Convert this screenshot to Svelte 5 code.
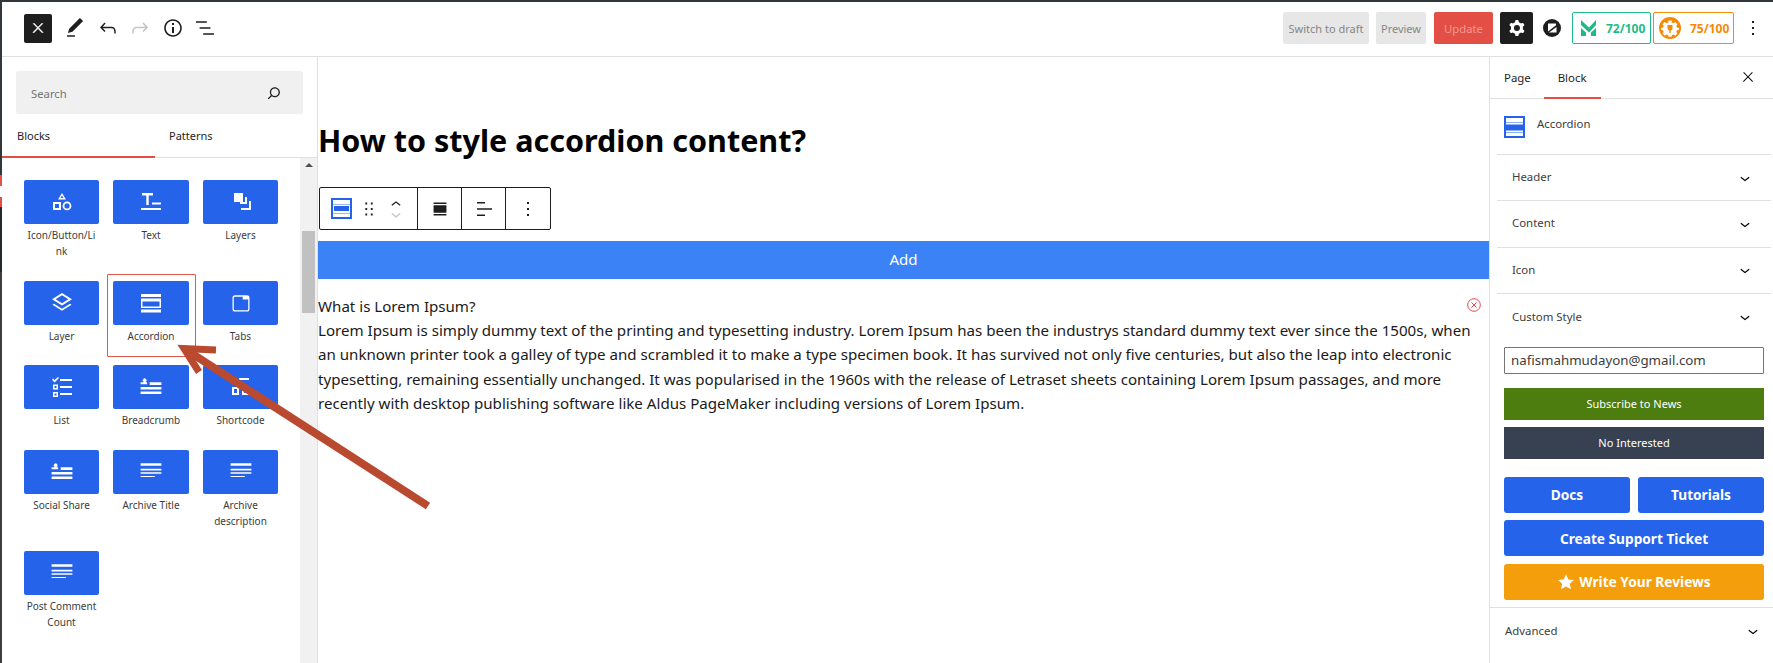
<script>
  const lines = 'M4 4h16v2H4zM4 8.5h16v1.5H4zM4 11.5h16v1.2H4zM4 14.5h11v1H4z';
  const byline = 'M4 7.5h2l.6-.2a1.4 1.4 0 1 1 1 0l.6.2h.8V9H4zM11 7.5h9V9.5h-9zM4 11h16v2H4zM4 14.5h16v2H4z';
  const blocks = [
    { label: 'Icon/Button/Link', kind: 'shapes' },
    { label: 'Text', kind: 'text' },
    { label: 'Layers', kind: 'layers' },
    { label: 'Layer', kind: 'layer' },
    { label: 'Accordion', kind: 'accordion', marked: true },
    { label: 'Tabs', kind: 'tabs' },
    { label: 'List', kind: 'list' },
    { label: 'Breadcrumb', kind: 'byline' },
    { label: 'Shortcode', kind: 'shortcode' },
    { label: 'Social Share', kind: 'byline' },
    { label: 'Archive Title', kind: 'lines' },
    { label: 'Archive description', kind: 'lines' },
    { label: 'Post Comment Count', kind: 'lines' }
  ];
  const panels = ['Header', 'Content', 'Icon', 'Custom Style'];
  const chevron = 'M17.5 11.6L12 16l-5.5-4.4.9-1.2L12 14l4.5-3.6 1 1.2z';
  const kebab = 'M13 19h-2v-2h2v2zm0-6h-2v-2h2v2zm0-6h-2V5h2v2z';
  const cross = 'M13 11.8l6.1-6.3-1-1-6.1 6.2-6.1-6.2-1 1 6.1 6.3-6.5 6.7 1 1 6.5-6.6 6.5 6.6 1-1z';
</script>

<div class="app">
  <header class="topbar">
    <div class="tools">
      <button class="close" aria-label="Close">
        <svg viewBox="0 0 24 24" width="16" height="16"><path fill="#fff" stroke="#fff" stroke-width=".8" d={cross}/></svg>
      </button>
      <svg class="tool" viewBox="0 0 24 24"><path d="M20.1 5.1L16.9 2 6.2 12.7l-1.3 4.4 4.5-1.3L20.1 5.1zM4 20.8h8v-1.5H4v1.5z"/></svg>
      <svg class="tool" viewBox="0 0 24 24"><path d="M18.3 11.7c-.6-.6-1.4-.9-2.3-.9H6.7l2.9-3.3-1.1-1-4.5 5L8.5 16l1-1-2.7-2.7H16c.5 0 .9.2 1.3.5 1 1 1 3.4 1 4.5v.3h1.5v-.2c0-1.5 0-4.3-1.5-5.7z"/></svg>
      <svg class="tool off" viewBox="0 0 24 24"><path d="M15.6 6.5l-1.1 1 2.9 3.3H8c-.9 0-1.7.3-2.3.9-1.4 1.5-1.4 4.2-1.4 5.6v.2h1.5v-.3c0-1.1 0-3.5 1-4.5.3-.3.7-.5 1.3-.5h9.2L14.5 15l1.1 1.1 4.6-4.6-4.6-5z"/></svg>
      <svg class="tool" viewBox="0 0 24 24"><path d="M12 3.2c-4.8 0-8.8 3.9-8.8 8.8 0 4.8 3.9 8.8 8.8 8.8 4.8 0 8.8-3.9 8.8-8.8 0-4.8-4-8.8-8.8-8.8zm0 16c-4 0-7.2-3.3-7.2-7.2C4.8 8 8 4.8 12 4.8s7.2 3.3 7.2 7.2c0 4-3.2 7.2-7.2 7.2zM11 17h2v-6h-2v6zm0-8h2V7h-2v2z"/></svg>
      <svg class="tool" viewBox="0 0 24 24"><path d="M13.8 5.2H3v1.5h10.8V5.2zm-3.6 12v1.5H21v-1.5H10.2zm7.2-6H6.6v1.5h10.8v-1.5z"/></svg>
    </div>
    <div class="actions">
      <span class="btn draft">Switch to draft</span>
      <span class="btn preview">Preview</span>
      <span class="btn update">Update</span>
      <span class="gear">
        <svg viewBox="0 0 24 24" width="24" height="24"><path fill="#fff" fill-rule="evenodd" d="M10.289 4.836A1 1 0 0111.275 4h1.306a1 1 0 01.987.836l.244 1.466c.787.26 1.503.679 2.108 1.218l1.393-.522a1 1 0 011.216.437l.653 1.13a1 1 0 01-.23 1.273l-1.148.944a6.025 6.025 0 010 2.435l1.149.946a1 1 0 01.23 1.272l-.653 1.13a1 1 0 01-1.216.437l-1.394-.522c-.605.54-1.32.958-2.108 1.218l-.244 1.466a1 1 0 01-.987.836h-1.306a1 1 0 01-.986-.836l-.244-1.466a5.995 5.995 0 01-2.108-1.218l-1.394.522a1 1 0 01-1.217-.436l-.653-1.131a1 1 0 01.23-1.272l1.149-.946a6.026 6.026 0 010-2.435l-1.148-.944a1 1 0 01-.23-1.272l.653-1.131a1 1 0 011.217-.437l1.393.522a5.994 5.994 0 012.108-1.218l.244-1.466zM14.929 12a3 3 0 11-6 0 3 3 0 016 0z"/></svg>
      </span>
      <svg class="zlogo" viewBox="0 0 18 18" width="18" height="18">
        <circle cx="9" cy="9" r="9" fill="#1e1e1e"/>
        <path fill="#fff" d="M5 4.500h8v1.800L5 12.500zM13.500 8v5.500H6z"/>
      </svg>
      <span class="score green">
        <svg viewBox="0 0 16 16" width="16" height="16"><path fill="#1fbb85" d="M0 0L8 7.500L15 0V5L8 12.500L0 5ZM0 8L5 12.500V16H0ZM15 8V16H10V12.500Z"/></svg>
        <b>72/100</b>
      </span>
      <span class="score orange">
        <svg viewBox="0 0 22 22" width="22" height="22"><circle cx="11" cy="11" r="11" fill="#f58a07"/><path fill="#fff" fill-rule="evenodd" d="M9.500 3.500h3l.4 2 1.700.7 1.700-1.100 2.100 2.100-1.100 1.700.7 1.700 2 .4v1.800l-2 .4-.7 1.700 1.100 1.700-2.100 2.100-1.700-1.100-1.700.7-.4 1.500h-3l-.4-1.500-1.700-.7-1.700 1.100-2.100-2.100 1.100-1.700-.7-1.700-2-.4V11l2-.4.7-1.700-1.100-1.700 2.100-2.100 1.700 1.100 1.700-.7zM8.500 8v3.200c0 1.200 1 2.200 1.800 2.300V16h1.400v-2.500c.8-.1 1.800-1.100 1.800-2.300V8z"/></svg>
        <b>75/100</b>
      </span>
      <svg class="more" viewBox="0 0 24 24" width="24" height="24"><path d={kebab}/></svg>
    </div>
  </header>

  <div class="body">
    <aside class="inserter">
      <div class="search">
        <span>Search</span>
        <svg viewBox="0 0 24 24" width="20" height="20"><path d="M13 5c-3.300 0-6 2.700-6 6 0 1.400.5 2.700 1.300 3.700l-3.800 3.800 1.100 1.100 3.800-3.800c1 .8 2.300 1.300 3.700 1.300 3.300 0 6-2.700 6-6S16.300 5 13 5zm0 10.500c-2.500 0-4.500-2-4.500-4.500s2-4.500 4.500-4.500 4.500 2 4.500 4.500-2 4.500-4.500 4.500z"/></svg>
      </div>
      <div class="ins-tabs">
        <span class="ins-tab on">Blocks</span>
        <span class="ins-tab">Patterns</span>
      </div>
      <div class="ins-scroll">
        <div class="grid">
          {#each blocks as b}
            <div class="item" class:marked={b.marked}>
              <div class="tile">
                <svg viewBox="0 0 24 24" width="24" height="24" fill="#fff">
                  {#if b.kind === 'shapes'}
                    <path d="M12 3l4 6.500H8zm0 2.600L10.500 8h3z" fill-rule="evenodd"/>
                    <path d="M3 12h8v8H3zm2 2v4h4v-4z" fill-rule="evenodd"/>
                    <path d="M17 11.500a4.400 4.400 0 1 1 0 8.800 4.400 4.400 0 0 1 0-8.800zm0 1.800a2.600 2.600 0 1 0 0 5.200 2.600 2.600 0 0 0 0-5.200z" fill-rule="evenodd"/>
                  {:else if b.kind === 'text'}
                    <path d="M3 3h11v2.400h-4.300V15H7.300V5.400H3zM13 12.500h9v2h-9zM2 18h20v2H2z"/>
                  {:else if b.kind === 'layers'}
                    <path d="M5 3h9v9H5zM16 7h2v7h-7v-2h5zM20 11h2v9h-10v-2h8z"/>
                  {:else if b.kind === 'layer'}
                    <path d="M12 2l10 6.300-10 6.300L2 8.300zm0 2.300L5.600 8.300 12 12.300l6.400-4z" fill-rule="evenodd"/>
                    <path d="M4 12.800l8 5 8-5 1.500 1-9.500 6-9.500-6z"/>
                  {:else if b.kind === 'accordion'}
                    <path d="M2 3h20v3H2zM2 18.500h20v3H2z"/>
                    <path d="M2 7.500h20v9.500H2zm1.500 3v5h17v-5z" fill-rule="evenodd"/>
                  {:else if b.kind === 'tabs'}
                    <path transform="translate(1.800 1.800) scale(.85)" d="M5 3h14a3 3 0 0 1 3 3v13a3 3 0 0 1-3 3H5a3 3 0 0 1-3-3V6a3 3 0 0 1 3-3zm0 1.500A1.500 1.500 0 0 0 3.500 6v13A1.500 1.500 0 0 0 5 20.500h14a1.500 1.500 0 0 0 1.500-1.500V8H14V4.500z" fill-rule="evenodd"/>
                  {:else if b.kind === 'list'}
                    <path d="M2 4.500l1-1 1.500 1.500L8 2l1 1-4.500 4.500zM10 4h12v2H10zM10 11h12v2H10zM10 18h12v2H10z"/>
                    <path d="M3 9.500h5v5H3zm1.500 1.500v2h2v-2zM3 17h5v5H3zm1.500 1.500v2h2v-2z" fill-rule="evenodd"/>
                  {:else if b.kind === 'byline'}
                    <path d={byline} transform="translate(-3.600 -2.400) scale(1.300)"/>
                  {:else if b.kind === 'shortcode'}
                    <path d="M10 3h10v2H10zM3 3h5v5H3zM3 12h7v8H3zm2 2v4h3v-4zM13 12h7v8h-7zm2 2v4h3v-4z" fill-rule="evenodd"/>
                  {:else}
                    <path d={lines} transform="translate(-3.600 -1.500) scale(1.300 1.200)"/>
                  {/if}
                </svg>
              </div>
              <div class="label">{b.label}</div>
            </div>
          {/each}
        </div>
        <div class="scrollbar">
          <i class="up"></i>
          <i class="thumb"></i>
        </div>
      </div>
    </aside>

    <main class="canvas">
      <h1>How to style accordion content?</h1>
      <div class="toolbar">
        <div class="group first">
          <svg class="acc" viewBox="0 0 21 21" width="21" height="21">
            <rect x="1" y="1" width="19" height="19" fill="#fff" stroke="#2563eb" stroke-width="2"/>
            <path d="M2 6.500h17" stroke="#9db9f3" stroke-width="1"/>
            <rect x="3" y="8" width="15" height="5" fill="#2563eb"/>
            <path d="M2 15.500h17" stroke="#9db9f3" stroke-width="1"/>
          </svg>
          <svg class="drag" viewBox="0 0 24 24" width="22" height="22"><path d="M8 7h2V5H8v2zm0 6h2v-2H8v2zm0 6h2v-2H8v2zm6-14v2h2V5h-2zm0 8h2v-2h-2v2zm0 6h2v-2h-2v2z"/></svg>
          <div class="mover">
            <svg viewBox="0 0 24 12" width="20" height="10"><path d="M6.500 9.400L12 5l5.500 4.400-.9 1.200L12 7l-4.500 3.600-1-1.200z"/></svg>
            <svg viewBox="0 0 24 12" width="20" height="10" class="dim"><path d="M17.500 3.600L12 8 6.500 3.600l.9-1.200L12 6l4.500-3.600 1 1.200z"/></svg>
          </div>
        </div>
        <div class="group">
          <svg viewBox="0 0 24 24" width="22" height="22"><path d="M5 5h14v1.500H5zM5 8h14v8H5zM5 17.500h14V19H5z"/></svg>
        </div>
        <div class="group">
          <svg viewBox="0 0 24 24" width="24" height="24"><path d="M5 5h8v1.500H5zM5 11.250h15v1.500H5zM5 17.500h8V19H5z"/></svg>
        </div>
        <div class="group last">
          <svg viewBox="0 0 24 24" width="24" height="24"><path d={kebab}/></svg>
        </div>
      </div>
      <div class="add">Add</div>
      <div class="question">
        <span>What is Lorem Ipsum?</span>
        <svg viewBox="0 0 14 14" width="14" height="14" fill="none" stroke="#e5484d"><circle cx="7" cy="7" r="6.300"/><path d="M4.500 4.500l5 5M9.500 4.500l-5 5"/></svg>
      </div>
      <p>Lorem Ipsum is simply dummy text of the printing and typesetting industry. Lorem Ipsum has been the industrys standard dummy text ever since the 1500s, when an unknown printer took a galley of type and scrambled it to make a type specimen book. It has survived not only five centuries, but also the leap into electronic typesetting, remaining essentially unchanged. It was popularised in the 1960s with the release of Letraset sheets containing Lorem Ipsum passages, and more recently with desktop publishing software like Aldus PageMaker including versions of Lorem Ipsum.</p>
    </main>

    <aside class="settings">
      <div class="set-tabs">
        <span class="set-tab">Page</span>
        <span class="set-tab on">Block</span>
        <svg viewBox="0 0 24 24" width="16" height="16"><path d={cross}/></svg>
      </div>
      <div class="card">
        <svg viewBox="0 0 21 22" width="21" height="22">
          <rect x="1" y="1" width="19" height="20" fill="#fff" stroke="#2563eb" stroke-width="2"/>
          <path d="M2 6.500h17M2 16.500h17" stroke="#8fb0f0" stroke-width="1"/>
          <rect x="2" y="8.500" width="17" height="6" fill="#2563eb"/>
        </svg>
        <span>Accordion</span>
      </div>
      <div class="panels">
        {#each panels as p}
          <div class="panel">
            <span>{p}</span>
            <svg viewBox="0 0 24 24" width="20" height="20"><path d={chevron}/></svg>
          </div>
        {/each}
      </div>
      <div class="form">
        <input value="nafismahmudayon@gmail.com" readonly />
        <div class="cta sub">Subscribe to News</div>
        <div class="cta no">No Interested</div>
        <div class="links">
          <span class="link">Docs</span>
          <span class="link">Tutorials</span>
          <span class="link wide">Create Support Ticket</span>
          <span class="link wide review">
            <svg viewBox="0 0 24 24" width="18" height="18"><path fill="#fff" d="M12 1.500l3.200 7 7.300.8-5.400 5 1.500 7.500-6.600-3.800-6.600 3.800 1.500-7.500-5.400-5 7.300-.8z"/></svg>
            Write Your Reviews
          </span>
        </div>
      </div>
      <div class="advanced">
        <span>Advanced</span>
        <svg viewBox="0 0 24 24" width="20" height="20"><path d={chevron}/></svg>
      </div>
    </aside>
  </div>

  <div class="edge"></div>
  <svg class="arrow" viewBox="0 0 1773 663" width="1773" height="663" fill="none" stroke="#b94a30">
    <path d="M188 351L428 506" stroke-width="8"/>
    <path d="M216 350L184 348.500L199 372" stroke-width="7"/>
  </svg>
</div>

<style>
  :global(body) { margin: 0; background: #fff; }
  * { box-sizing: border-box; }
  .app {
    position: relative;
    width: 1773px;
    height: 663px;
    overflow: hidden;
    border-top: 2px solid #32373c;
    padding-left: 2px;
    background: #fff;
    font-family: "Noto Sans", "Open Sans", sans-serif;
    color: #1e1e1e;
    display: flex;
    flex-direction: column;
  }
  .topbar {
    height: 55px;
    flex: none;
    display: flex;
    align-items: center;
    justify-content: space-between;
    border-bottom: 1px solid #e0e0e0;
    padding: 0 8px 2px 22px;
  }
  .tools { display: flex; align-items: center; gap: 8.400px; }
  .close {
    width: 28px; height: 29px; padding: 0; border: 0; border-radius: 2px;
    background: #1e1e1e; display: flex; align-items: center; justify-content: center;
    margin-right: 3px;
  }
  .tool { width: 24px; height: 24px; fill: #1e1e1e; }
  .tool.off { fill: #c4c4c4; }
  .actions { display: flex; align-items: center; height: 32px; }
  .btn {
    height: 32px; display: flex; align-items: center; justify-content: center;
    border-radius: 2px; font-size: 11px; margin-right: 7px;
  }
  .draft { width: 86px; background: #e7e7e7; color: #868686; }
  .preview { width: 50px; background: #e7e7e7; color: #868686; margin-right: 8px; }
  .update { width: 59px; background: #e34f45; color: #f09a92; font-size: 11.300px; }
  .gear {
    width: 33px; height: 32px; background: #1e1e1e; border-radius: 2px;
    display: flex; align-items: center; justify-content: center; margin-right: 10px;
  }
  .zlogo { margin-right: 11px; }
  .score {
    height: 32px; border: 1px solid; border-radius: 2px; display: flex; align-items: center;
    font-size: 12px;
  }
  .score b { font-weight: 700; }
  .green { width: 79px; border-color: #1fbb85; color: #1fbb85; padding-left: 8px; gap: 9px; margin-right: 2px; }
  .orange { width: 81px; border-color: #f58a07; color: #f58a07; padding-left: 5px; gap: 9px; margin-right: 7px; }
  .more { fill: #1e1e1e; }

  .body { flex: 1; display: flex; min-height: 0; }

  .inserter {
    width: 316px; flex: none; border-right: 1px solid #e0e0e0;
    display: flex; flex-direction: column;
  }
  .search {
    margin: 14px 14px 0 14px; height: 43px; flex: none; background: #f0f0f0; border-radius: 2px;
    display: flex; align-items: center; justify-content: space-between;
    padding: 1px 19px 0 15px; font-size: 11.300px; color: #757575;
  }
  .search svg { fill: #1e1e1e; }
  .ins-tabs {
    height: 44px; flex: none; display: flex; border-bottom: 1px solid #e0e0e0;
  }
  .ins-tab {
    width: 153px; height: 44px; font-size: 11px; padding-left: 15px; line-height: 44px;
  }
  .ins-tab + .ins-tab { padding-left: 14px; }
  .ins-tab.on { box-shadow: inset 0 -2px 0 #e34f45; }
  .ins-scroll { flex: 1; display: flex; justify-content: space-between; min-height: 0; }
  .grid {
    width: 276px; margin-left: 22px; padding-top: 22px;
    display: grid; grid-template-columns: 75px 76px 75px; column-gap: 14px; row-gap: 21.700px;
    grid-auto-rows: min-content;
  }
  .item { position: relative; }
  .item.marked::after {
    content: ""; position: absolute; left: -6px; right: -7px; top: -7px; bottom: -13px;
    border: 1.500px solid #e0584e; border-radius: 1px;
  }
  .tile {
    height: 44px; background: #2563eb; border-radius: 2px;
    display: flex; align-items: center; justify-content: center;
  }
  .label {
    margin-top: 3px; padding: 0 1.500px; font-size: 10px; line-height: 16px; text-align: center; color: #3c3c3c;
    overflow-wrap: anywhere;
  }
  .scrollbar { width: 17px; background: #f1f1f1; position: relative; }
  .up {
    position: absolute; left: 5px; top: 5px; width: 0; height: 0;
    border: 4px solid transparent; border-top: 0; border-bottom: 4px solid #505050;
  }
  .thumb { position: absolute; left: 2px; right: 2px; top: 73px; height: 82px; background: #c1c1c1; }

  .canvas { flex: 1; min-width: 0; font-size: 15.120px; line-height: 24.500px; color: #1a1a1a; }
  h1 {
    margin: 58px 0 0 0; font-size: 30.500px; line-height: 50px; font-weight: 700; color: #000; height: 72px;
  }
  .toolbar {
    margin-left: 1px; width: 232px; height: 43px; border: 1px solid #1e1e1e; border-radius: 2px; display: flex; background: #fff;
  }
  .group { display: flex; align-items: center; justify-content: center; width: 44px; border-left: 1px solid #1e1e1e; fill: #1e1e1e; }
  .group.first { width: 97px; border-left: 0; justify-content: flex-start; padding-left: 11px; }
  .group.last { flex: 1; }
  .drag { margin-left: 5.700px; }
  .mover { display: flex; flex-direction: column; margin-left: 6px; }
  .mover .dim { fill: #c4c4c4; margin-top: 4px; }
  .add {
    margin-top: 11px; height: 38px; background: #3b82f6; color: #fff; text-align: center;
    line-height: 37px;
  }
  .question {
    margin-top: 15px; display: flex; align-items: center; justify-content: space-between; padding-right: 8px;
    height: 24.500px;
  }
  .question svg { margin-top: -2px; }
  p { margin: -1px 0 0; width: 1161px; }

  .settings { width: 284px; flex: none; border-left: 1px solid #e0e0e0; font-size: 11.400px; color: #3c3c3c; }
  .set-tabs {
    height: 42px; display: flex; align-items: center; border-bottom: 1px solid #e0e0e0; padding-left: 14px; position: relative;
    color: #1e1e1e;
  }
  .set-tab { margin-right: 27px; height: 41px; line-height: 41px; position: relative; }
  .set-tab.on::after {
    content: ""; position: absolute; left: -14px; right: -14px; bottom: -1px; height: 2px; background: #e34f45;
  }
  .set-tabs svg { position: absolute; right: 17px; top: 12px; }
  .card { height: 55px; display: flex; align-items: center; gap: 12px; padding: 0 0 6px 14px; }
  .card svg { margin-top: 6px; }
  .panels { margin: 0 2px 0 7px; }
  .panel {
    height: 46.300px; border-top: 1px solid #e0e0e0; display: flex; align-items: center;
    justify-content: space-between; padding: 0 16px 0 15px;
  }
  .panel span, .advanced span { margin-top: -2px; }
  .panel:last-child { height: 48px; }
  .form { padding: 6px 9px 0 14px; }
  input {
    display: block; width: 100%; height: 27px; border: 1px solid #757575; border-radius: 1px;
    padding: 0 6px; font: 13.300px "Noto Sans", sans-serif; color: #3c3c3c; outline: 0;
  }
  .cta { height: 32px; display: flex; align-items: center; justify-content: center; color: #fff; font-size: 11px; }
  .sub { background: #4d7c0f; margin-top: 14px; }
  .no { background: #374151; margin-top: 7px; }
  .links { margin-top: 18px; display: grid; grid-template-columns: 1fr 1fr; gap: 7.500px 8px; }
  .link {
    height: 36px; background: #2563eb; color: #fff; font-size: 13.700px; font-weight: 700; border-radius: 3px;
    display: flex; align-items: center; justify-content: center; gap: 4px;
  }
  .wide { grid-column: 1 / -1; }
  .review { background: #f59e0b; }
  .advanced {
    margin-top: 7px; height: 48px; border-top: 1px solid #e0e0e0; display: flex; align-items: center;
    justify-content: space-between; padding: 0 10px 0 15px; color: #3c3c3c;
  }

  .edge {
    position: absolute; left: 0; top: -2px; width: 2px; height: 663px;
    background: linear-gradient(#32373c 0 175px, #e34f45 175px 186px, #fff 186px 197px, #e34f45 197px 207px, #23282d 207px 272px, #3c4043 272px);
  }
  .arrow { position: absolute; left: 0; top: -2px; pointer-events: none; }
</style>
